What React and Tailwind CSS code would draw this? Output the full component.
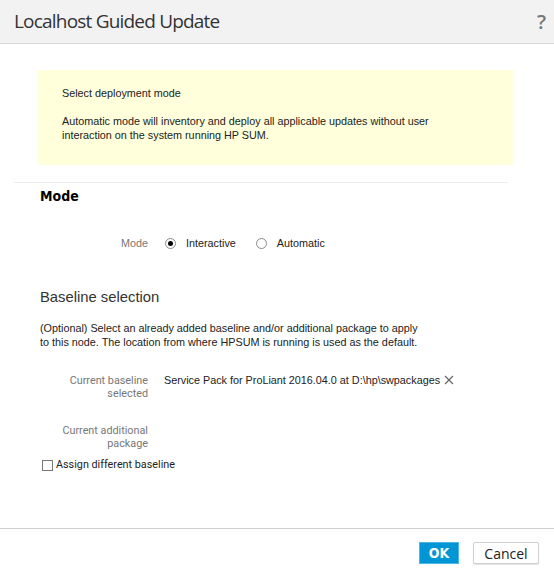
import { useState } from "react";

function Radio({ checked }) {
  return (
    <span className="flex h-[11px] w-[11px] items-center justify-center rounded-full border border-[#8a8a8a] bg-white">
      {checked && <span className="h-[5px] w-[5px] rounded-full bg-black" />}
    </span>
  );
}

export default function App() {
  const [mode, setMode] = useState("interactive");
  const [assign, setAssign] = useState(false);

  return (
    <div className="relative h-[573px] w-[554px] overflow-hidden bg-white font-['Liberation_Sans',Arial,sans-serif] text-[10.8px] text-[#222]">
      <div className="flex h-[44px] items-center justify-between border-b border-[#d6d6d6] bg-[#f2f2f2] pl-[14px] pr-[8px]">
        <h1 className="font-['Open_Sans',sans-serif] text-[19px] tracking-[-0.8px] text-[#333]">
          Localhost Guided Update
        </h1>
        <span className="font-['Open_Sans',sans-serif] text-[20px] font-semibold text-[#777]">?</span>
      </div>

      <div className="ml-[38px] mr-[41px] mt-[26px] h-[95px] bg-[#ffffdb] pl-[24px] pt-[16px] leading-[14px]">
        <p>Select deployment mode</p>
        <p className="mt-[14px]">
          Automatic mode will inventory and deploy all applicable updates without user
          <br />
          interaction on the system running HP SUM.
        </p>
      </div>

      <div className="ml-[14px] mr-[46px] mt-[17px] border-t border-[#ececec]" />

      <h2 className="ml-[40px] mt-[3px] font-['DejaVu_Sans_Condensed','Open_Sans',sans-serif] text-[14px] font-bold text-black">
        Mode
      </h2>

      <div className="mt-[29px] flex items-center pl-[121px] leading-[14px]">
        <span className="text-[#777]">Mode</span>
        <button className="ml-[17px] flex items-center" onClick={() => setMode("interactive")}>
          <Radio checked={mode === "interactive"} />
          <span className="ml-[10px]">Interactive</span>
        </button>
        <button className="ml-[20px] flex items-center" onClick={() => setMode("automatic")}>
          <Radio checked={mode === "automatic"} />
          <span className="ml-[10px]">Automatic</span>
        </button>
      </div>

      <h3 className="ml-[40px] mt-[37px] text-[14.8px] leading-[20px] text-[#333]">Baseline selection</h3>

      <p className="ml-[40px] mt-[14px] leading-[14px]">
        (Optional) Select an already added baseline and/or additional package to apply
        <br />
        to this node. The location from where HPSUM is running is used as the default.
      </p>

      <div className="mt-[25px] grid grid-cols-[108px_1fr] gap-x-[16px] gap-y-[24px] pl-[40px] leading-[13px]">
        <span className="text-right font-['Roboto',sans-serif] text-[#777]">
          Current baseline
          <br />
          selected
        </span>
        <span className="flex items-start">
          Service Pack for ProLiant 2016.04.0 at D:\hp\swpackages
          <svg className="ml-[4px] mt-[1px]" width="10" height="10" viewBox="0 0 10 10">
            <path d="M1 1L9 9M9 1L1 9" stroke="#666" strokeWidth="1.2" />
          </svg>
        </span>
        <span className="text-right font-['Roboto',sans-serif] text-[#777]">
          Current additional
          <br />
          package
        </span>
        <span />
      </div>

      <label className="ml-[42px] mt-[8px] flex items-center font-['Roboto',sans-serif] leading-[14px]">
        <input
          type="checkbox"
          checked={assign}
          onChange={(e) => setAssign(e.target.checked)}
          className="h-[11px] w-[11px] appearance-none border border-[#777] bg-white"
        />
        <span className="ml-[3px]">Assign different baseline</span>
      </label>

      <div className="absolute bottom-0 left-0 right-0 flex h-[45px] items-start justify-end gap-[14px] border-t border-[#cfcfcf] pr-[15px] pt-[13px]">
        <button className="h-[22px] w-[40px] border border-[#4fb6e3] bg-[#0096d6] font-['DejaVu_Sans_Condensed','Open_Sans',sans-serif] text-[14px] font-bold text-white">
          OK
        </button>
        <button className="h-[22px] w-[66px] rounded-[2px] border border-[#d0d0d0] bg-white font-['Open_Sans',sans-serif] text-[14px] text-[#222] shadow-[0_1px_1px_rgba(0,0,0,0.12)]">
          Cancel
        </button>
      </div>
    </div>
  );
}
